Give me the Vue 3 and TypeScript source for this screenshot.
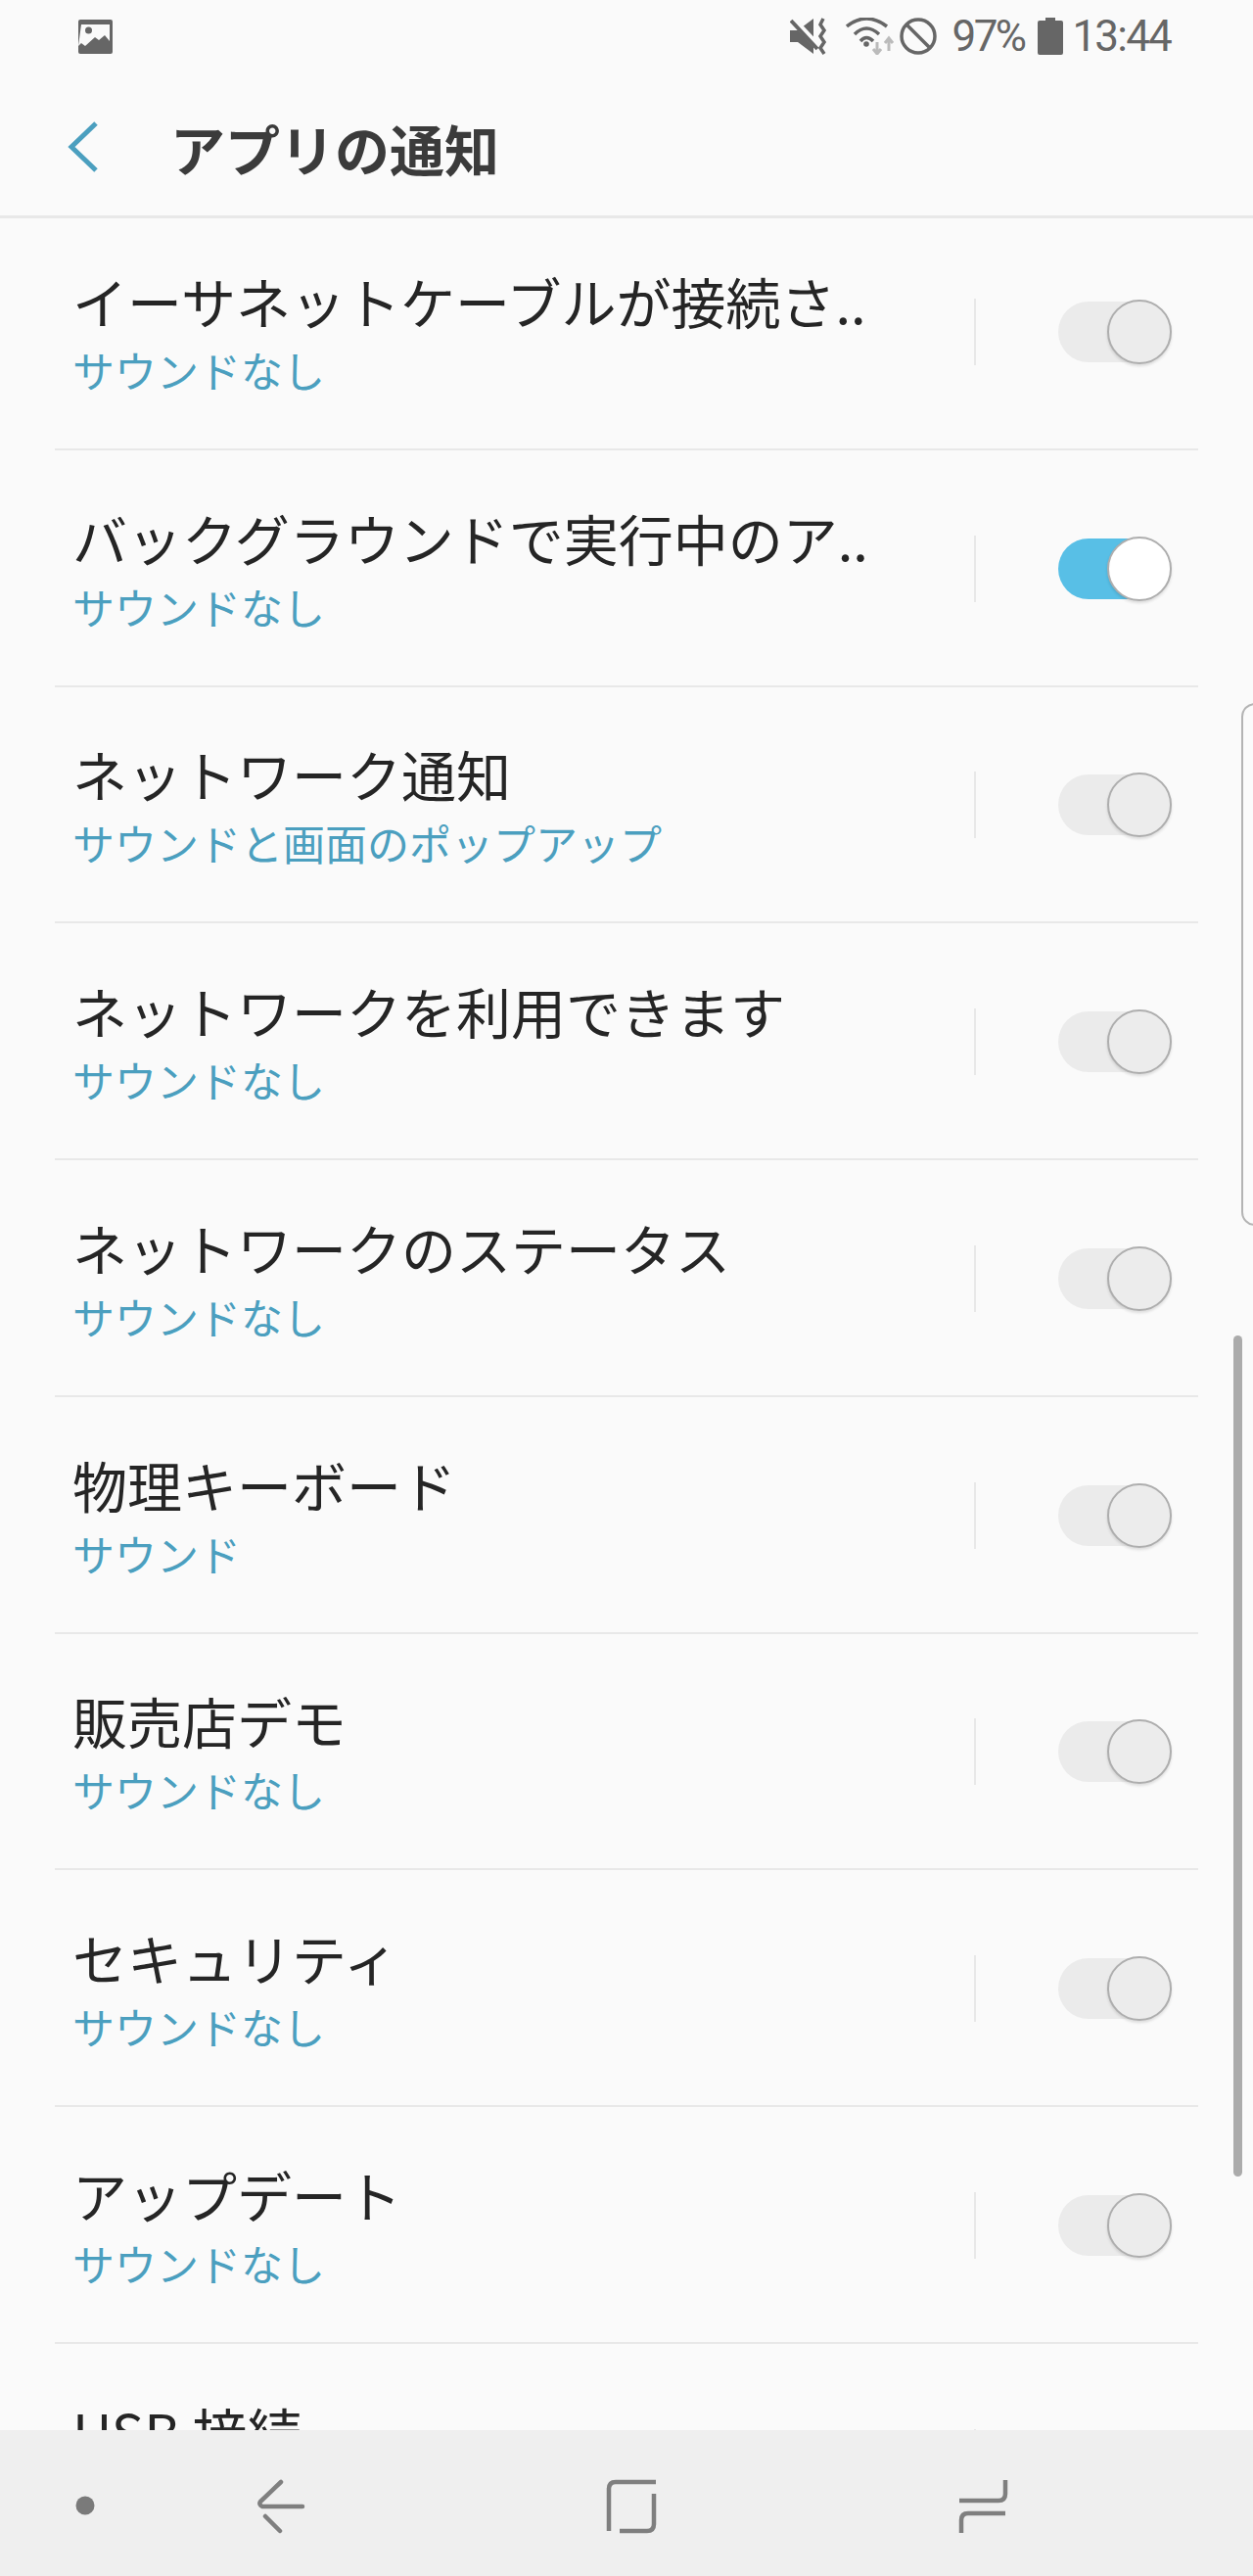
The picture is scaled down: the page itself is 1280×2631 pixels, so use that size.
<script setup lang="ts">
interface Channel {
  title: string
  sound: string
  on?: boolean
}

const channels: Channel[] = [
  { title: 'イーサネットケーブルが接続さ..', sound: 'サウンドなし' },
  { title: 'バックグラウンドで実行中のア..', sound: 'サウンドなし', on: true },
  { title: 'ネットワーク通知', sound: 'サウンドと画面のポップアップ' },
  { title: 'ネットワークを利用できます', sound: 'サウンドなし' },
  { title: 'ネットワークのステータス', sound: 'サウンドなし' },
  { title: '物理キーボード', sound: 'サウンド' },
  { title: '販売店デモ', sound: 'サウンドなし' },
  { title: 'セキュリティ', sound: 'サウンドなし' },
  { title: 'アップデート', sound: 'サウンドなし' },
  { title: 'USB 接続', sound: 'サウンドなし' },
]
</script>

<template>
  <div class="screen">
    <!-- ステータスバー -->
    <div class="status-bar">
      <svg width="35" height="35" viewBox="0 0 35 35">
        <rect width="35" height="35" rx="2" fill="#666" />
        <path d="M3 5h29v17l-5-6-6 5-4-3-10 9-4-3-3 3z" fill="#fafafa" />
        <circle cx="10.500" cy="11" r="3.500" fill="#666" />
      </svg>
      <div class="status-right">
        <svg width="40" height="38" viewBox="0 0 40 38">
          <path d="M0 13h8L24 1v36L8 25H0z" fill="#666" />
          <path d="M2 1l27 29" stroke="#fafafa" stroke-width="7" fill="none" />
          <path d="M1 3l27 29" stroke="#666" stroke-width="4" fill="none" />
          <path d="M34 1l-3 6 4 6-4 6 4 6-4 6 4 6" stroke="#666" stroke-width="3.500" fill="none" />
        </svg>
        <svg class="wifi" width="52" height="38" viewBox="0 0 52 38">
          <path d="M1 9Q21-7 42 9M9 17Q21 5 34 17M15 24Q21 17 28 24" stroke="#666" stroke-width="3.500" fill="none" />
          <circle cx="21" cy="27" r="2.800" fill="#666" />
          <path d="M32 25v12M28 32l4 5 4-5M44 34V21M40 26l4-5 4 5" stroke="#bbb" stroke-width="3" fill="none" />
        </svg>
        <svg class="ban" width="38" height="38" viewBox="0 0 38 38">
          <circle cx="19" cy="19" r="17" stroke="#666" stroke-width="3.500" fill="none" />
          <path d="M7 7l24 24" stroke="#666" stroke-width="3.500" />
        </svg>
        <span class="pct">97%</span>
        <svg class="batt" width="26" height="38" viewBox="0 0 26 38">
          <path d="M8 0h10v3h6a2 2 0 0 1 2 2v31a2 2 0 0 1-2 2H2a2 2 0 0 1-2-2V5a2 2 0 0 1 2-2h6z" fill="#666" />
        </svg>
        <span class="clock">13:44</span>
      </div>
    </div>

    <!-- ヘッダー -->
    <div class="header">
      <svg class="back" width="32" height="54" viewBox="0 0 32 54">
        <path d="M30 3L5 27l25 24" stroke="#4b9fbf" stroke-width="5" fill="none" />
      </svg>
      <h1>アプリの通知</h1>
    </div>

    <div class="list">
      <div v-for="c in channels" :key="c.title" class="row">
        <div class="texts">
          <div class="title">{{ c.title }}</div>
          <div class="sound">{{ c.sound }}</div>
        </div>
        <div class="divider"></div>
        <div class="toggle" :class="{ on: c.on }">
          <div class="thumb"></div>
        </div>
      </div>
    </div>

    <div class="edge-handle"></div>
    <div class="scrollbar"></div>

    <!-- ナビゲーションバー -->
    <div class="navbar">
      <svg width="1280" height="149" viewBox="0 0 1280 149">
        <circle cx="87" cy="77" r="9.500" fill="#7a7a7a" />
        <g stroke="#7f7f7f" stroke-width="4.500" fill="none" stroke-linecap="round">
          <path d="M287 53L266 73q-2 3 2 5h41M271 88l15 15" />
        </g>
        <g stroke="#7f7f7f" stroke-width="4.500" fill="none">
          <path d="M622 103V60q0-7 7-7h41M668 65v31q0 7-7 7h-28" />
          <path d="M1027 51v14q0 7-7 7h-40M1027 85h-38q-7 0-7 7v13" />
        </g>
      </svg>
    </div>
  </div>
</template>

<style scoped>
.screen {
  position: relative;
  display: flex;
  flex-direction: column;
  height: 2631px;
  overflow: hidden;
  background: #fafafa;
  font-family: "Noto Sans CJK JP", "Noto Sans", sans-serif;
}

.status-bar {
  display: flex;
  justify-content: space-between;
  align-items: center;
  height: 74px;
  padding: 0 84px 0 80px;
  flex-shrink: 0;
}

.status-bar svg {
  display: block;
  flex-shrink: 0;
}

.status-right {
  display: flex;
  align-items: center;
  color: #666;
  font-family: Roboto, sans-serif;
  font-size: 44px;
  letter-spacing: -2.600px;
  line-height: 74px;
}

.wifi {
  margin-left: 17px;
}

.ban {
  margin-left: 3px;
}

.pct {
  margin-left: 16px;
}

.batt {
  margin-left: 14px;
}

.clock {
  margin-left: 9px;
  letter-spacing: -1.800px;
}

.header {
  display: flex;
  align-items: center;
  height: 149px;
  padding: 6px 0 0 68px;
  border-bottom: 3px solid #e8e8e8;
  box-sizing: border-box;
  flex-shrink: 0;
}

.back {
  margin-right: 74px;
}

.header h1 {
  margin: 0;
  font-size: 56px;
  font-weight: 700;
  color: #3b3b3b;
}

.list {
  flex: 1;
  min-height: 0;
  overflow: hidden;
}

.row {
  display: flex;
  align-items: center;
  height: 241.750px;
  margin: 0 56px;
  padding: 2px 27px 0 18px;
  border-bottom: 2px solid #e8e8e8;
  box-sizing: border-box;
}

.row:first-child {
  margin-top: -5px;
}

.texts {
  flex: 1;
  min-width: 0;
}

.title {
  font-size: 56px;
  line-height: 76px;
  color: #252525;
  white-space: nowrap;
}

.sound {
  font-size: 43px;
  line-height: 64px;
  color: #4b9fbf;
  white-space: nowrap;
}

.divider {
  width: 2px;
  height: 68px;
  margin-right: 84px;
  background: #e8e8e8;
}

.toggle {
  position: relative;
  width: 116px;
  height: 62px;
}

.toggle::before {
  content: "";
  position: absolute;
  top: 0;
  left: 0;
  width: 112px;
  height: 62px;
  border-radius: 31px;
  background: #ebebeb;
}

.toggle.on::before {
  background: #58bfe6;
}

.thumb {
  position: absolute;
  top: -2px;
  right: 0;
  width: 66px;
  height: 66px;
  box-sizing: border-box;
  border-radius: 50%;
  border: 2px solid #aeaeae;
  background: #ececec;
  box-shadow: 0 2px 3px rgba(0, 0, 0, 0.12);
}

.toggle.on .thumb {
  background: #fff;
}

.edge-handle {
  position: absolute;
  top: 718px;
  right: -20px;
  width: 32px;
  height: 534px;
  box-sizing: border-box;
  border: 2px solid #b4b4b4;
  border-radius: 14px;
  background: #fbfbfb;
}

.scrollbar {
  position: absolute;
  top: 1364px;
  right: 11px;
  width: 9px;
  height: 859px;
  border-radius: 5px;
  background: #ababab;
}

.navbar {
  height: 149px;
  background: #efefef;
  flex-shrink: 0;
}

.navbar svg {
  display: block;
}
</style>
